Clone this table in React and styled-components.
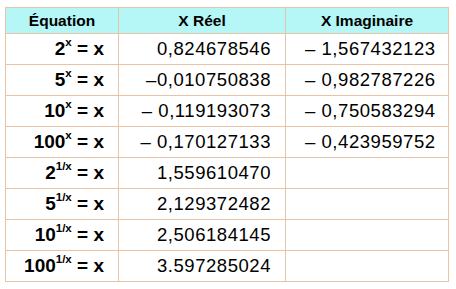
import React from "react";
import styled, { createGlobalStyle } from "styled-components";

const Global = createGlobalStyle`
    body {
        margin: 0;
        background: #ffffff;
        font-family: "Liberation Sans", Arial, sans-serif;
    }
`

const Page = styled.div`
    padding: 7px 0 0 5px;
`

const Table = styled.table`
    border-collapse: collapse;
    table-layout: fixed;
    width: 443px;
    color: #000;
`

const Head = styled.th`
    background-color: #b4f7f6;
    border: 1px solid #e9c3a6;
    height: 25px;
    padding: 0;
    font-size: 15.5px;
    font-weight: bold;
    text-align: center;
`

const Cell = styled.td`
    border: 1px solid #e9c3a6;
    height: 30px;
    padding: 0 ${props => props.$padR || 0}px 0 ${props => props.$padL || 0}px;
    text-align: ${props => props.$align || "right"};
    font-size: ${props => props.$bold ? "19px" : "18.5px"};
    font-weight: ${props => props.$bold ? "bold" : "normal"};
    letter-spacing: ${props => props.$bold ? "0" : "0.55px"};
    white-space: nowrap;
`

const Sup = styled.sup`
    font-size: 11.5px;
    position: relative;
    top: -1px;
    vertical-align: top;
    line-height: 1;
    letter-spacing: 0;
`

const rows = [
    { base: "2", exp: "x", re: "0,824678546", im: "– 1,567432123" },
    { base: "5", exp: "x", re: "–0,010750838", im: "– 0,982787226" },
    { base: "10", exp: "x", re: "– 0,119193073", im: "– 0,750583294" },
    { base: "100", exp: "x", re: "– 0,170127133", im: "– 0,423959752" },
    { base: "2", exp: "1/x", re: "1,559610470", im: "" },
    { base: "5", exp: "1/x", re: "2,129372482", im: "" },
    { base: "10", exp: "1/x", re: "2,506184145", im: "" },
    { base: "100", exp: "1/x", re: "3.597285024", im: "" },
]

export default function App() {
    return (
        <Page>
            <Global />
            <Table>
                <colgroup>
                    <col style={{ width: "113px" }} />
                    <col style={{ width: "167px" }} />
                    <col style={{ width: "163px" }} />
                </colgroup>
                <thead>
                    <tr>
                        <Head>Équation</Head>
                        <Head>X Réel</Head>
                        <Head>X Imaginaire</Head>
                    </tr>
                </thead>
                <tbody>
                    {rows.map((r, i) => (
                        <tr key={i}>
                            <Cell $bold $padR={14}>
                                {r.base}<Sup>{r.exp}</Sup> = x
                            </Cell>
                            <Cell $padR={14}>{r.re}</Cell>
                            <Cell $align="left" $padL={19}>{r.im}</Cell>
                        </tr>
                    ))}
                </tbody>
            </Table>
        </Page>
    )
}
